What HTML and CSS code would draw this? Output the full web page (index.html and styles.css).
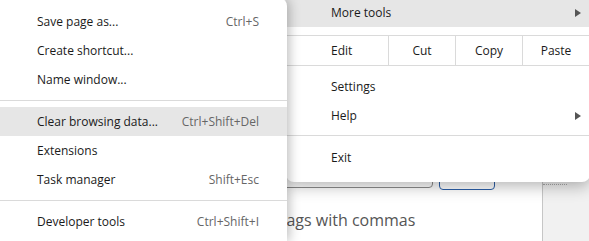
FILE: index.html
```html
<!DOCTYPE html>
<html lang="en">
<head>
    <meta charset="UTF-8">
    <meta name="viewport" content="width=device-width, initial-scale=1.0">
    <title>Menu</title>
    <link rel="stylesheet" href="styles.css">
</head>
<body>
    <div class="page">
        <div class="main">
            <div class="tag-row">
                <div class="tag-input"></div>
                <div class="tag-btn"></div>
            </div>
            <p class="tag-hint">Separate tags with commas</p>
        </div>
        <div class="side">
            <div class="side-dots"></div>
        </div>
    </div>

    <div class="menu menu-main">
        <div class="item active">
            <span>More tools</span>
            <span class="arrow"></span>
        </div>
        <div class="edit-row">
            <span class="edit-label">Edit</span>
            <span class="edit-cell">Cut</span>
            <span class="edit-cell">Copy</span>
            <span class="edit-cell">Paste</span>
        </div>
        <div class="item first">
            <span>Settings</span>
        </div>
        <div class="item">
            <span>Help</span>
            <span class="arrow"></span>
        </div>
        <div class="sep sep-main"></div>
        <div class="item">
            <span>Exit</span>
        </div>
    </div>

    <div class="menu menu-sub">
        <div class="item">
            <span>Save page as...</span>
            <span class="key">Ctrl+S</span>
        </div>
        <div class="item">
            <span>Create shortcut...</span>
        </div>
        <div class="item">
            <span>Name window...</span>
        </div>
        <div class="sep"></div>
        <div class="item active">
            <span>Clear browsing data...</span>
            <span class="key">Ctrl+Shift+Del</span>
        </div>
        <div class="item">
            <span>Extensions</span>
        </div>
        <div class="item">
            <span>Task manager</span>
            <span class="key">Shift+Esc</span>
        </div>
        <div class="sep"></div>
        <div class="item">
            <span>Developer tools</span>
            <span class="key">Ctrl+Shift+I</span>
        </div>
    </div>
</body>
</html>
```

FILE: styles.css
```css
body {
    margin: 0;
    width: 589px;
    height: 241px;
    overflow: hidden;
    position: relative;
    background-color: #fff;
    font-family: 'Open Sans', 'Noto Sans', sans-serif;
}

/* page behind the menus */
.page {
    display: flex;
    height: 241px;
}
.main {
    flex: 1;
}
.tag-row {
    display: flex;
    margin-top: 158px;
}
.tag-input {
    width: 431px;
    height: 28px;
    border: 1px solid #8c8c8c;
    border-radius: 4px;
}
.tag-btn {
    width: 54px;
    height: 30px;
    margin-left: 6px;
    border: 1px solid #2c5fa8;
    border-radius: 4px;
}
.tag-hint {
    margin: 19px 0 0;
    padding-left: 210px;
    font-size: 16px;
    line-height: 22px;
    color: #555;
}
.side {
    width: 46px;
    border-left: 1px solid #c6c6c6;
    background-color: #f1f1f1;
}
.side-dots {
    margin-top: 184px;
    width: 24px;
    border-top: 1px dotted #aaa;
}

/* menus */
.menu {
    position: absolute;
    background-color: #fff;
    font-size: 12px;
    color: #1a1a1a;
}
.menu-main {
    top: -2px;
    left: 286px;
    width: 304px;
    padding-bottom: 10px;
    border-radius: 8px;
    box-shadow: 0 4px 16px rgba(0, 0, 0, 0.3);
}
.menu-sub {
    top: -2px;
    left: 0;
    width: 287px;
    height: 234px;
    padding-top: 9px;
    border-radius: 0 8px 0 0;
    box-shadow: 2px 0 12px rgba(0, 0, 0, 0.28);
    z-index: 2;
}
.item {
    display: flex;
    justify-content: space-between;
    align-items: center;
    height: 29px;
    padding: 0 28px 0 37px;
}
.menu-main .item {
    padding: 0 9px 0 45px;
}
.menu-main .item.first {
    margin-top: 6px;
}
.item.active {
    background-color: #e6e6e6;
}
.key {
    color: #666;
}
.arrow {
    width: 0;
    height: 0;
    border-left: 6px solid #555;
    border-top: 4.5px solid transparent;
    border-bottom: 4.5px solid transparent;
}
.sep {
    height: 1px;
    margin: 6px 0;
    background-color: #dadada;
}
.sep-main {
    margin: 5px 0 7px;
}
.edit-row {
    display: flex;
    margin-top: 8px;
    height: 29px;
    border-top: 1px solid #dadada;
    border-bottom: 1px solid #dadada;
}
.edit-row span {
    display: flex;
    align-items: center;
}
.edit-label {
    width: 57px;
    padding-left: 45px;
}
.edit-cell {
    width: 66px;
    justify-content: center;
    border-left: 1px solid #dadada;
}
```
